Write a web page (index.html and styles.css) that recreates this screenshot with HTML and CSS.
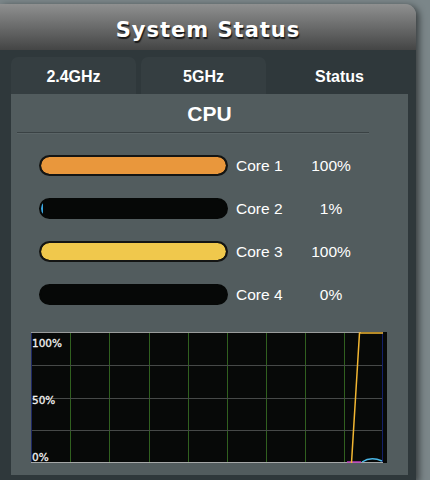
FILE: index.html
```html
<!DOCTYPE html>
<html lang="en">
<head>
  <meta charset="UTF-8">
  <title>System Status</title>
  <link rel="stylesheet" href="styles.css">
</head>
<body>
  <div class="panel">
    <header class="panel-head">
      <h1>System Status</h1>
    </header>

    <div class="panel-body">
      <nav class="tabs">
        <div class="tab">2.4GHz</div>
        <div class="tab">5GHz</div>
        <div class="tab active">Status</div>
      </nav>

      <section class="content">
        <h2>CPU</h2>
        <div class="divider"></div>

        <div class="cores">
          <div class="core">
            <div class="bar"><div class="fill orange" style="width: 100%"></div></div>
            <span class="core-name">Core 1</span>
            <span class="core-pct">100%</span>
          </div>
          <div class="core">
            <div class="bar empty"><div class="fill blue" style="width: 2px"></div></div>
            <span class="core-name">Core 2</span>
            <span class="core-pct">1%</span>
          </div>
          <div class="core">
            <div class="bar"><div class="fill yellow" style="width: 100%"></div></div>
            <span class="core-name">Core 3</span>
            <span class="core-pct">100%</span>
          </div>
          <div class="core">
            <div class="bar empty"></div>
            <span class="core-name">Core 4</span>
            <span class="core-pct">0%</span>
          </div>
        </div>

        <div class="chart">
          <svg width="356" height="131" viewBox="0 0 356 131">
            <rect x="0" y="0" width="356" height="131" fill="#070908"/>
            <!-- grid -->
            <g stroke="#30601f" stroke-width="1">
              <line x1="39.5" y1="1" x2="39.5" y2="130"/>
              <line x1="78.5" y1="1" x2="78.5" y2="130"/>
              <line x1="118.5" y1="1" x2="118.5" y2="130"/>
              <line x1="157.5" y1="1" x2="157.5" y2="130"/>
              <line x1="196.5" y1="1" x2="196.5" y2="130"/>
              <line x1="235.5" y1="1" x2="235.5" y2="130"/>
              <line x1="274.5" y1="1" x2="274.5" y2="130"/>
              <line x1="313.5" y1="1" x2="313.5" y2="130"/>
            </g>
            <g stroke="#464948" stroke-width="1">
              <line x1="0" y1="33.5" x2="352" y2="33.5"/>
              <line x1="0" y1="66.5" x2="352" y2="66.5"/>
              <line x1="0" y1="98.5" x2="352" y2="98.5"/>
            </g>
            <!-- borders -->
            <line x1="0.5" y1="0" x2="0.5" y2="131" stroke="#1d2866"/>
            <line x1="351.5" y1="0" x2="351.5" y2="131" stroke="#14206a"/>
            <line x1="0" y1="0.5" x2="330" y2="0.5" stroke="#9a9c9c"/>
            <line x1="0" y1="130.5" x2="352" y2="130.5" stroke="#a6a8a8"/>
            <!-- data -->
            <path d="M316 130 L330 130" stroke="#c040c0" stroke-width="1.5" fill="none"/>
            <path d="M331 130 Q340 124 351 129" stroke="#4ab8e8" stroke-width="1.5" fill="none"/>
            <path d="M320.5 131 L328.5 1 L352 1" stroke="#f2b632" stroke-width="1.5" fill="none"/>
            <!-- labels -->
            <g fill="#f2f2f2" font-family="DejaVu Sans, sans-serif" font-size="10.5" stroke="#f2f2f2" stroke-width="0.3">
              <text x="1" y="15">100%</text>
              <text x="1" y="72">50%</text>
              <text x="1" y="129">0%</text>
            </g>
          </svg>
        </div>
      </section>
    </div>
  </div>
</body>
</html>
```

FILE: styles.css
```css
body {
  margin: 0;
  background-color: #7b8689;
  font-family: 'Liberation Sans', Arial, sans-serif;
  overflow: hidden;
}

.panel {
  margin-top: 4px;
  width: 416px;
  border-top-right-radius: 11px;
  box-shadow: 3px 2px 7px rgba(0, 0, 0, 0.55);
}

.panel-head {
  height: 46px;
  border-top-right-radius: 11px;
  background: linear-gradient(to bottom, #8f9090, #444545);
  display: flex;
  justify-content: center;
  align-items: center;
}

.panel-head h1 {
  margin: 6px 0 0;
  font-family: 'DejaVu Sans', Verdana, sans-serif;
  font-weight: bold;
  font-size: 21px;
  letter-spacing: 1px;
  color: #ffffff;
  text-shadow: 1px 2px 1px #1a1a1a;
}

.panel-body {
  background-color: #2f383b;
  padding: 7px 8px 6px 11px;
}

.tabs {
  display: flex;
  gap: 5px;
  height: 37px;
}

.tab {
  width: 125px;
  border-radius: 7px 7px 0 0;
  background-color: #353e41;
  color: #ffffff;
  font-weight: bold;
  font-size: 16px;
  display: flex;
  justify-content: center;
  align-items: center;
  padding-top: 2px;
  box-sizing: border-box;
}

.tab.active {
  width: 137px;
  background-color: transparent;
}

.content {
  background-color: #525c5e;
  height: 381px;
  padding-top: 7px;
  box-sizing: border-box;
}

.content h2 {
  margin: 0;
  text-align: center;
  color: #ffffff;
  font-size: 21px;
  font-weight: bold;
  line-height: 25px;
}

.divider {
  width: 352px;
  margin: 6px 0 0 6px;
  height: 1px;
  background-color: #3a4244;
  border-bottom: 1px solid #5b6567;
}

.cores {
  display: flex;
  flex-direction: column;
  gap: 22px;
  margin: 21px 0 0 28px;
}

.core {
  display: flex;
  align-items: center;
  height: 21px;
  color: #ffffff;
  font-size: 15.5px;
}

.bar {
  width: 189px;
  height: 21px;
  box-sizing: border-box;
  border: 2px solid #141514;
  border-radius: 11px;
  background-color: #060807;
  overflow: hidden;
}

.bar.empty {
  border-color: #060807;
}

.fill {
  height: 100%;
  border-radius: 9px;
}

.fill.orange {
  background-color: #e9973c;
}

.fill.yellow {
  background-color: #f0c84c;
}

.fill.blue {
  border-radius: 0;
  background-color: #3aa6e0;
}

.core-name {
  margin-left: 8px;
  width: 66px;
}

.core-pct {
  width: 58px;
  text-align: center;
}

.chart {
  margin: 27px 0 0 20px;
  width: 356px;
  height: 131px;
}

.chart svg {
  display: block;
}
```
